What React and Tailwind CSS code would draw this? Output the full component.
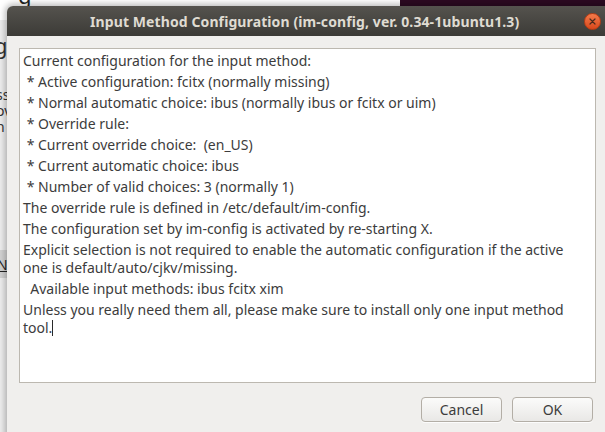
import React from 'react';

const lines = [
  { t: 'Current configuration for the input method:' },
  { t: ' * Active configuration: fcitx (normally missing)' },
  { t: ' * Normal automatic choice: ibus (normally ibus or fcitx or uim)' },
  { t: ' * Override rule: ' },
  { t: ' * Current override choice:  (en_US)' },
  { t: ' * Current automatic choice: ibus' },
  { t: ' * Number of valid choices: 3 (normally 1)' },
  { t: 'The override rule is defined in /etc/default/im-config.' },
  { t: 'The configuration set by im-config is activated by re-starting X.' },
  {
    t: 'Explicit selection is not required to enable the automatic configuration if the active',
    w: 'one is default/auto/cjkv/missing.',
  },
  { t: '  Available input methods: ibus fcitx xim' },
  {
    t: 'Unless you really need them all, please make sure to install only one input method',
    w: 'tool.',
    caret: true,
  },
];

const CloseButton = () => (
  <div className="w-[17px] h-[17px] rounded-full bg-gradient-to-b from-[#f27a4a] to-[#d9471a] border border-[#b83d15] flex items-center justify-center">
    <svg width="7" height="7" viewBox="0 0 7 7">
      <path d="M1 1 L6 6 M6 1 L1 6" stroke="#4a2a1c" strokeWidth="1.2" strokeLinecap="round" />
    </svg>
  </div>
);

const DialogButton = ({ label }) => (
  <button className="w-[81px] h-[25px] rounded-[4px] border border-[#b3aea6] bg-gradient-to-b from-[#fbfbfa] to-[#e9e8e6] text-[14px] text-[#3c3c3c] shadow-[0_1px_0_rgba(255,255,255,0.8)]">
    {label}
  </button>
);

export default function App() {
  return (
    <div
      className="relative w-[605px] h-[432px] overflow-hidden bg-[#ededed]"
      style={{ fontFamily: '"Noto Sans", "Open Sans", sans-serif' }}
    >
      {/* desktop and the window behind the dialog */}
      <div className="absolute left-[400px] top-0 right-0 h-[20px] bg-[#2c0a22]" />
      <div className="absolute left-0 top-0 w-[400px] h-[20px] bg-white" />
      <span className="absolute left-[18px] top-[-18px] text-[22px] leading-[26px] text-[#222]">g</span>
      <span className="absolute left-[-6px] top-[32px] text-[22px] leading-[26px] text-[#333]">g</span>
      <div className="absolute left-[-4px] top-[87px] flex flex-col text-[14px] leading-[16px] text-[#333]">
        <span>ss</span>
        <span>ov</span>
        <span>n</span>
      </div>
      <div className="absolute left-0 top-[250px] w-[10px] h-[28px] bg-[#d2d2d2]">
        <span className="absolute left-[-3px] top-[4px] text-[14px] text-[#222] underline">N</span>
      </div>

      {/* dialog window */}
      <div className="absolute left-[7px] top-[6px] w-[620px] bottom-[-10px] flex flex-col bg-[#f0efed] rounded-t-[6px] shadow-[0_0_6px_2px_rgba(0,0,0,0.28)]">
        <div className="h-[30px] shrink-0 rounded-t-[6px] bg-gradient-to-b from-[#55534e] to-[#3c3b37] flex items-center">
          <div className="w-[83px]" />
          <span className="text-[14px] font-bold text-[#dfdbd2] tracking-[0.1px]">
            Input Method Configuration (im-config, ver. 0.34-1ubuntu1.3)
          </span>
          <div className="ml-auto mr-[26px]">
            <CloseButton />
          </div>
        </div>

        <div className="flex flex-col px-[12px] pt-[12px]">
          <div className="w-[577px] h-[335px] bg-white border border-[#bcb8b0] px-[3px] pt-[3px] text-[14px] text-[#3c3c3c] leading-[18px]">
            {lines.map((l, i) => (
              <div key={i} className="mb-[3px] whitespace-pre">
                <div>{l.t}</div>
                {l.w && (
                  <div className="flex items-center">
                    <span>{l.w}</span>
                    {l.caret && <span className="w-px h-[16px] bg-[#2a2a2a]" />}
                  </div>
                )}
              </div>
            ))}
          </div>

          <div className="flex gap-[10px] mt-[14px] ml-[402px]">
            <DialogButton label="Cancel" />
            <DialogButton label="OK" />
          </div>
        </div>
      </div>
    </div>
  );
}
